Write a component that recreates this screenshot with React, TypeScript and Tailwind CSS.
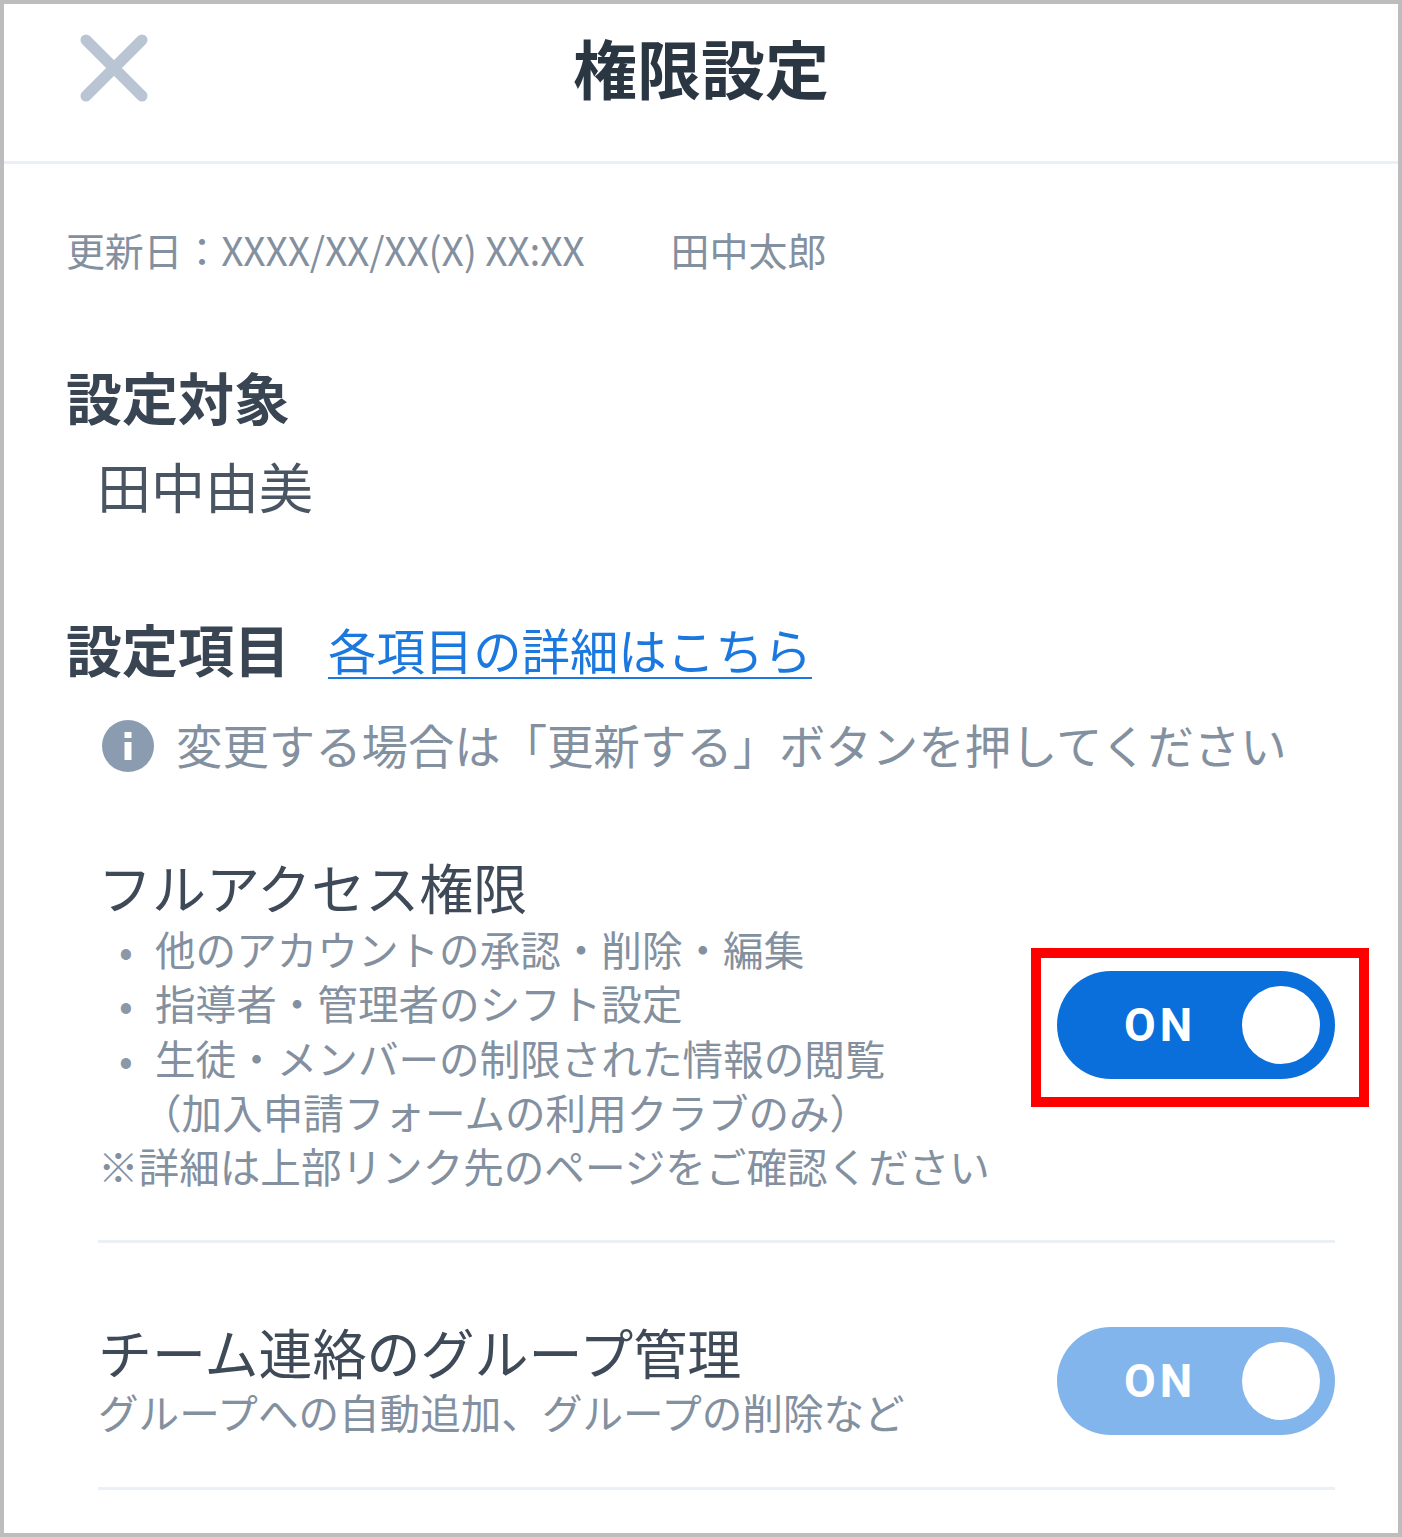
const jp = { fontFamily: '"Noto Sans CJK JP", "Noto Sans", sans-serif' };

function Toggle({ disabled }: { disabled?: boolean }) {
  return (
    <div className={`flex h-[108px] w-[278px] items-center justify-between rounded-full pl-[67px] pr-[15px] ${disabled ? 'bg-[#82b5ec]' : 'bg-[#0a6edb]'}`}>
      <span className="text-[46px] font-bold leading-none tracking-[4px] text-white" style={{ fontFamily: 'Roboto, sans-serif' }}>ON</span>
      <span className="h-[78px] w-[78px] rounded-full bg-white" />
    </div>
  );
}

function Bullet({ children }: { children: React.ReactNode }) {
  return (
    <li className="flex">
      <span className="w-[57px] pl-[21px] text-[#8b98a8]">•</span>
      <span>{children}</span>
    </li>
  );
}

export default function App() {
  return (
    <div className="h-[1537px] w-[1402px] overflow-hidden border-4 border-[#bdbdbd] bg-white" style={jp}>
      {/* Header */}
      <header className="relative flex h-[160px] items-center justify-center border-b-[3px] border-[#eaf0f6] pb-[34px]">
        <svg className="absolute left-[74px] top-[28px]" width="72" height="72" viewBox="0 0 72 72" fill="none">
          <path d="M8 8L64 64M64 8L8 64" stroke="#b9c5d2" strokeWidth="11" strokeLinecap="round" />
        </svg>
        <h1 className="text-[64px] font-bold leading-none text-[#2b3643]">権限設定</h1>
      </header>

      <main className="pl-[62px] pr-[63px]">
        <div className="mt-[59px] flex text-[39px] leading-[52px] text-[#8390a0]">
          <span className="tracking-[-0.2px]">更新日：XXXX/XX/XX(X) XX:XX</span>
          <span className="ml-[86px]">田中太郎</span>
        </div>

        <h2 className="mt-[88px] text-[56px] font-bold leading-[66px] text-[#3a4553]">設定対象</h2>
        <p className="mt-[24px] pl-[31px] text-[54px] leading-[66px] text-[#4a5563]">田中由美</p>

        <div className="mt-[96px] flex items-center">
          <h2 className="text-[56px] font-bold leading-[66px] text-[#3a4553]">設定項目</h2>
          <a className="ml-[38px] mt-[4px] border-b-[2px] border-[#1a78de] text-[48.4px] leading-[56px] text-[#1a78de]">各項目の詳細はこちら</a>
        </div>

        <div className="mt-[33px] flex items-center pl-[36px] text-[46.4px] leading-[60px] text-[#8390a0]">
          <svg className="mr-[22px] mt-[3px] shrink-0" width="52" height="52" viewBox="0 0 52 52">
            <circle cx="26" cy="26" r="26" fill="#8b9cb1" />
            <rect x="22.5" y="12" width="7" height="6" fill="#fff" />
            <rect x="22.5" y="22" width="7" height="18" fill="#fff" />
          </svg>
          <span>変更する場合は「更新する」ボタンを押してください</span>
        </div>

        {/* Full access */}
        <section className="ml-[32px] mt-[80px] flex items-center justify-between border-b-[3px] border-[#eaf0f6] pb-[47px]">
          <div>
            <h3 className="text-[54px] leading-[66px] text-[#3f4a58]">フルアクセス権限</h3>
            <ul className="mt-[2px] text-[40.6px] leading-[54.25px] text-[#8390a0]">
              <Bullet>他のアカウントの承認・削除・編集</Bullet>
              <Bullet>指導者・管理者のシフト設定</Bullet>
              <Bullet>
                生徒・メンバーの制限された情報の閲覧
                <br />
                <span className="ml-[-14px]">（加入申請フォームの利用クラブのみ）</span>
              </Bullet>
            </ul>
            <p className="text-[40.6px] leading-[54.25px] text-[#8390a0]">※詳細は上部リンク先のページをご確認ください</p>
          </div>
          <div className="relative mt-[2px] shrink-0">
            <Toggle />
            <div className="absolute bottom-[-28px] left-[-26px] right-[-34px] top-[-23px] border-[10px] border-[#ff0000]" />
          </div>
        </section>

        {/* Team group */}
        <section className="ml-[32px] flex items-center justify-between border-b-[3px] border-[#eaf0f6] pb-[48px] pt-[76px]">
          <div>
            <h3 className="text-[54px] leading-[66px] text-[#3f4a58]">チーム連絡のグループ管理</h3>
            <p className="text-[40.6px] leading-[54px] text-[#8390a0]">グループへの自動追加、グループの削除など</p>
          </div>
          <div className="mt-[4px] shrink-0">
            <Toggle disabled />
          </div>
        </section>
      </main>
    </div>
  );
}
